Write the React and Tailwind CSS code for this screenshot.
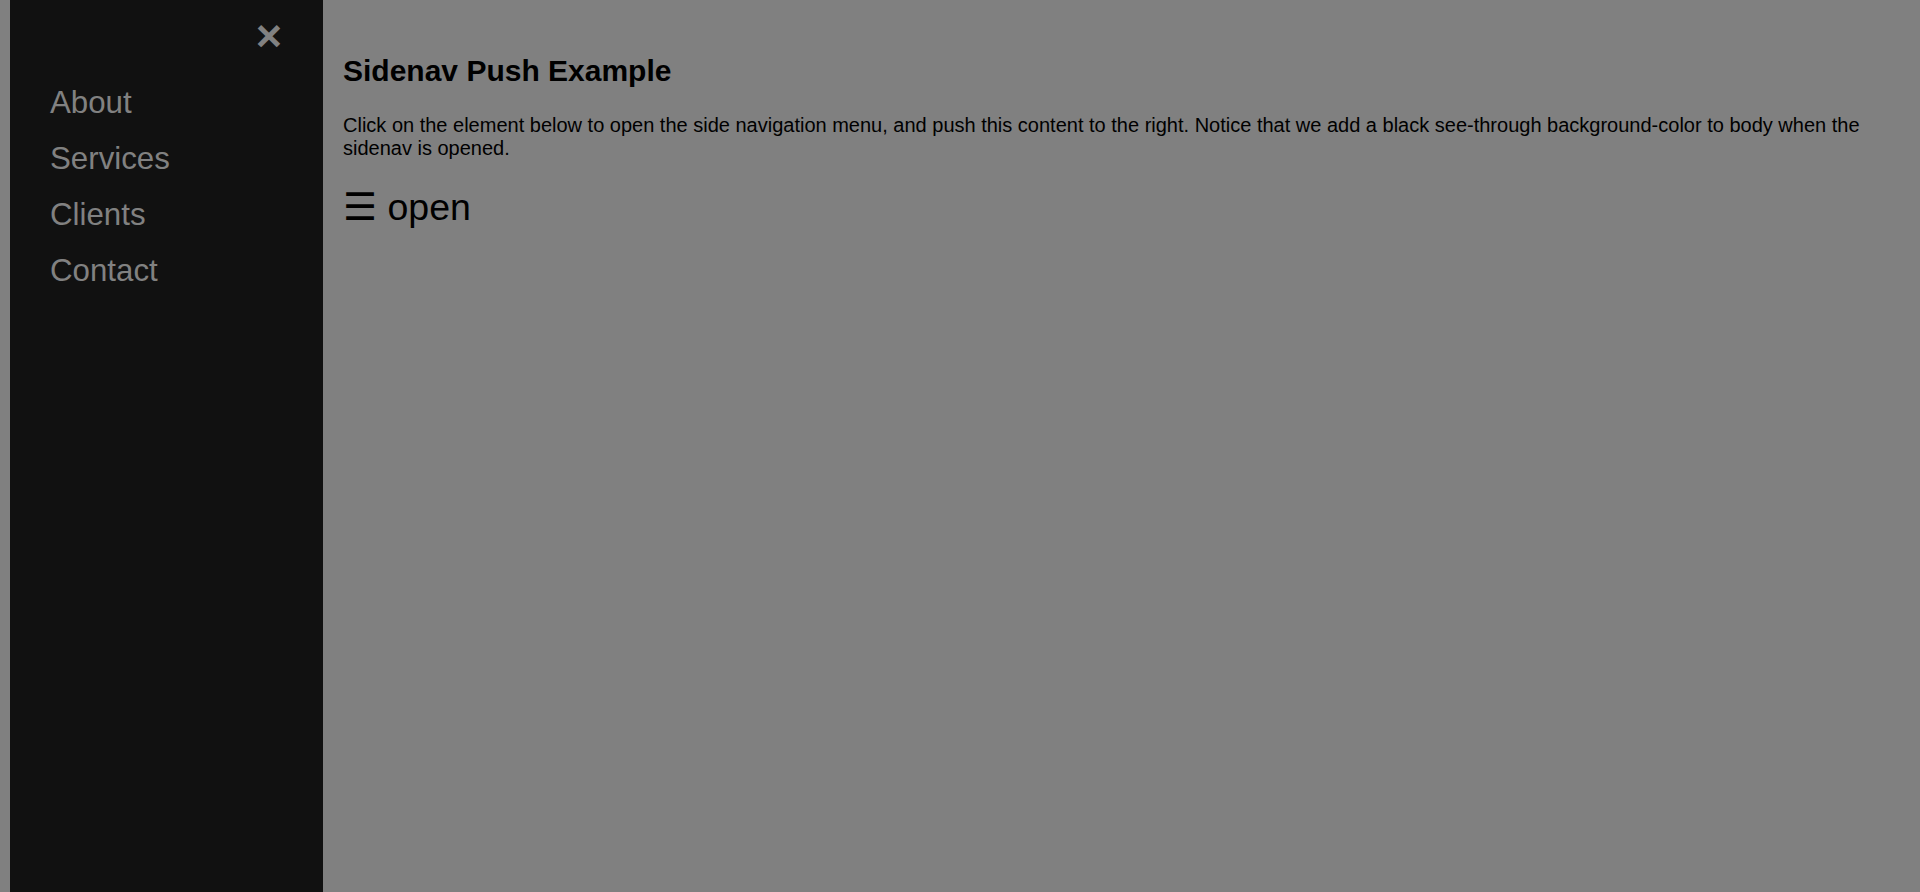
const links = ["About", "Services", "Clients", "Contact"];

function Sidenav() {
  return (
    <nav className="relative w-[313px] shrink-0 bg-[#111111] pt-[75px]">
      <a
        href="#"
        className="absolute top-[-8px] right-[31px] py-[10px] pl-[40px] pr-[10px] text-[45px] font-bold text-[#818181] no-underline"
      >
        ×
      </a>
      {links.map((label) => (
        <a
          key={label}
          href="#"
          className="block py-[10px] pl-[40px] pr-[10px] text-[31.25px] leading-[35.9px] text-[#818181] no-underline hover:text-[#f1f1f1]"
        >
          {label}
        </a>
      ))}
    </nav>
  );
}

export default function App() {
  return (
    <div className="flex min-h-[892px] bg-[#808080] pl-[10px] font-['Liberation_Sans',Arial,sans-serif] text-black">
      <Sidenav />
      <main className="flex-1 px-[20px] pt-[54px]">
        <h2 className="m-0 text-[30px] leading-[34.5px] font-bold">
          Sidenav Push Example
        </h2>
        <p className="mt-[25px] text-[20px] leading-[23px]">
          Click on the element below to open the side navigation menu, and push
          this content to the right. Notice that we add a black see-through
          background-color to body when the sidenav is opened.
        </p>
        <div className="mt-[26px] text-[37.5px] leading-[43px]">
          <span className="cursor-pointer">☰ open</span>
        </div>
      </main>
    </div>
  );
}
